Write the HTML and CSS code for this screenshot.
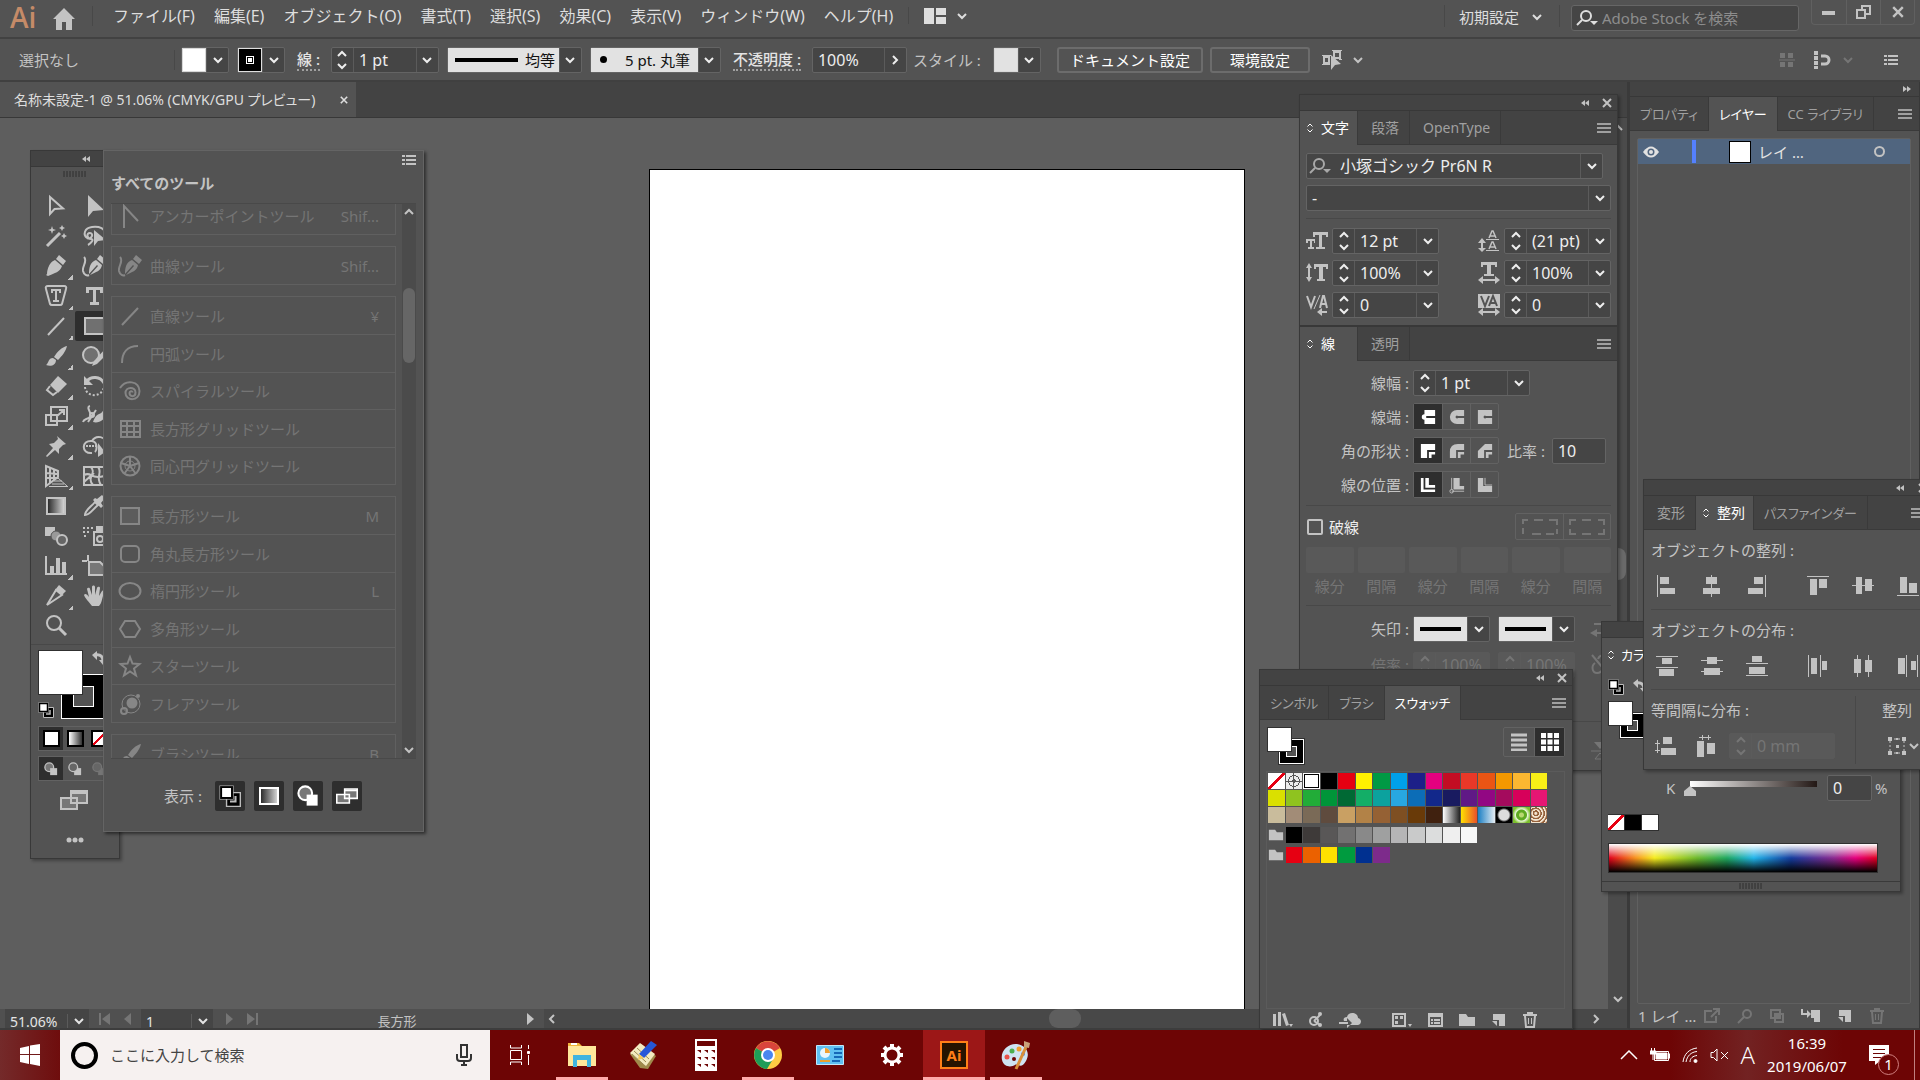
FILE: index.html
```html
<!DOCTYPE html>
<html lang="ja">
<head>
    <meta charset="UTF-8">
    <meta name="viewport" content="width=device-width, initial-scale=1.0">
    <title>名称未設定-1</title>
    <link rel="stylesheet" href="styles.css">
</head>
<body>
    <!-- Icon sprite -->
    <svg class="sprite" width="0" height="0" aria-hidden="true">
        <defs>
            <linearGradient id="bw"><stop offset="0" stop-color="#222"/><stop offset="1" stop-color="#ddd"/></linearGradient>
        </defs>
        <symbol id="down" viewBox="0 0 12 12"><path class="line2" d="M2 4l4 4 4-4"/></symbol>
        <symbol id="up" viewBox="0 0 12 12"><path class="line2" d="M2 8l4-4 4 4"/></symbol>
        <symbol id="right" viewBox="0 0 12 12"><path class="line2" d="M4 2l4 4-4 4"/></symbol>
        <symbol id="left" viewBox="0 0 12 12"><path class="line2" d="M8 2L4 6l4 4"/></symbol>
        <symbol id="spin" viewBox="0 0 12 24"><path class="line2" d="M2 8l4-4 4 4M2 16l4 4 4-4"/></symbol>
        <symbol id="sort" viewBox="0 0 8 12"><path class="line1" d="M1.500 4.500L4 2l2.500 2.500M1.500 7.500L4 10l2.500-2.500"/></symbol>
        <symbol id="menu" viewBox="0 0 14 12"><path class="line2" d="M0 2h14M0 6h14M0 10h14"/></symbol>
        <symbol id="list" viewBox="0 0 14 12"><path class="line2" d="M4 2h10M4 6h10M4 10h10M0 2h3M0 6h3M0 10h3"/></symbol>
        <symbol id="collapse" viewBox="0 0 8 6"><path class="solid" d="M4 0v6L0 3zM8 0v6L4 3z"/></symbol>
        <symbol id="expand" viewBox="0 0 8 6"><path class="solid" d="M0 0v6l4-3zM4 0v6l4-3z"/></symbol>
        <symbol id="close" viewBox="0 0 10 10"><path class="line2" d="M1 1l8 8M9 1L1 9"/></symbol>
        <symbol id="grip" viewBox="0 0 24 6"><path stroke="#353535" stroke-width="1.200" d="M1 0v6M4 0v6M7 0v6M10 0v6M13 0v6M16 0v6M19 0v6M22 0v6"/></symbol>
        <symbol id="home" viewBox="0 0 24 22"><path class="solid" d="M12 0L1 11h3v11h6v-8h4v8h6V11h3z"/></symbol>
        <symbol id="panes" viewBox="0 0 22 16"><path class="solid" d="M0 0h10v16H0zM12 0h10v7H12zM12 9h10v7H12z"/></symbol>
        <symbol id="find" viewBox="0 0 22 16"><circle class="line2" cx="10" cy="6" r="5"/><path class="line2" d="M6 10l-5 5"/><path class="solid" d="M14 11h8l-4 4z"/></symbol>
        <symbol id="minimize" viewBox="0 0 14 14"><path class="solid" d="M0 6h13v4H0z"/></symbol>
        <symbol id="restore" viewBox="0 0 18 16"><path class="line2" d="M2 6h8v8H2zM7 5V2h8v8h-4"/></symbol>
        <symbol id="isolate" viewBox="0 0 22 20"><path class="line2" d="M2 7h5v6H2zM12 2h6v6h-6z"/><path class="line1" d="M0 5.500h9M0 14.500h8M10 .500h10M20 9.500h-3"/><path class="solid" d="M9 5v15l4-5 6-1z"/></symbol>
        <symbol id="pixel-grid" viewBox="0 0 16 16"><path class="solid" d="M1 1h5v5H1zM9 1h5v5H9zM1 10h5v5H1zM9 10h5v5H9z"/><path class="line1" d="M0 8h16"/></symbol>
        <symbol id="magnet" viewBox="0 0 18 18"><path stroke="currentColor" stroke-width="4" stroke-dasharray="4 1" d="M3 0v18"/><path class="line3" d="M8 5h4a4 4 0 010 8H8"/></symbol>

        <!-- Tools -->
        <symbol id="t-select" viewBox="0 0 24 24"><path class="line2" d="M6 3v17l4.500-5 8.500-.500z"/></symbol>
        <symbol id="t-direct" viewBox="0 0 24 24"><path class="solid" d="M6 1v22l5-6 11-1z"/></symbol>
        <symbol id="t-wand" viewBox="0 0 24 24"><path class="line3" d="M3 22L16 9"/><path class="solid" d="M8 2l1 3 3 1-3 1-1 3-1-3-3-1 3-1zM18 1l1 2 2 1-2 1-1 2-1-2-2-1 2-1zM20 9l1 2 2 1-2 1-1 2-1-2-2-1 2-1z"/></symbol>
        <symbol id="t-lasso" viewBox="0 0 24 24"><path class="line2" d="M5 14C1 11 2 4 10 3s13 2 13 6M5 14c5 2 7-5 3-5s-3 6 1 6-1 5-3 6"/><path class="solid" d="M12 6v16l4-5 8-1z"/></symbol>
        <symbol id="t-pen" viewBox="0 0 24 24"><path class="solid" d="M15 1l7 6-3 4-7-6zM11 6l7 6c-2 6-7 7-14 10L2 21l9-8 1 1-8 8C2 22 3 9 11 6z"/></symbol>
        <symbol id="t-curve" viewBox="0 0 24 24"><path class="line2" d="M2 3c4 4-2 9-1 14 1 4 4 5 6 4"/><path class="solid" d="M18 1l6 5-3 4-6-5zM14 6l6 5c-1 6-6 7-12 10l8-9-1-1-8 9C7 14 8 8 14 6z"/></symbol>
        <symbol id="t-touchtype" viewBox="0 0 24 24"><path class="line2" d="M4 2h16q3 0 2 3l-4 15q-.500 1-2 1H8q-1.500 0-2-1L2 5q-1-3 2-3z"/><path class="solid" d="M7 5h10v4h-2V7h-2v9h2v2H9v-2h2V7H9v2H7z"/></symbol>
        <symbol id="t-type" viewBox="0 0 24 24"><path class="solid" d="M4 3h17v6h-3V6h-4v12h3v3H8v-3h3V6H7v3H4z"/></symbol>
        <symbol id="t-line" viewBox="0 0 24 24"><path class="line2" d="M4 21L20 4"/></symbol>
        <symbol id="t-rect" viewBox="0 0 24 24"><path fill="#707070" stroke="currentColor" stroke-width="2" d="M3 4h20v16H3z"/></symbol>
        <symbol id="t-box" viewBox="0 0 24 24"><path fill="#5c5c5c" stroke="currentColor" stroke-width="2" d="M3 4h18v16H3z"/></symbol>
        <symbol id="t-brush" viewBox="0 0 24 24"><path class="solid" d="M23 2C18 3 13 8 10 13l4 3c4-4 8-9 9-14zM9 14c-5 0-4 5-7 7 5 2 10 0 10-5z"/></symbol>
        <symbol id="t-shaper" viewBox="0 0 24 24"><circle cx="9" cy="11" r="8" fill="#707070" stroke="currentColor" stroke-width="2"/><path class="solid" d="M24 4L12 17l-2 5 5-2L24 11z"/></symbol>
        <symbol id="t-eraser" viewBox="0 0 24 24"><path class="solid" d="M14 2l9 8-9 9-8-8z"/><path class="line2" d="M6 12l-3 4 6 5 4-3"/></symbol>
        <symbol id="t-rotate" viewBox="0 0 24 24"><path class="line3" d="M5 7c4-5 13-5 17 2"/><path class="solid" d="M2 2v9h9z"/><path class="line2" stroke-dasharray="2 2" d="M3 13c1 11 18 11 19-1"/></symbol>
        <symbol id="t-scale" viewBox="0 0 24 24"><path class="line2" d="M7 3h16v14H7zM2 11h11v10H2zM13 12l7-6M15 6h5v5"/></symbol>
        <symbol id="t-width" viewBox="0 0 24 24"><path class="line2" d="M8 2c-5 1 3 8 0 11s-6 1-7 5M14 6l-8 12"/><circle class="line2" cx="10" cy="11" r="2"/><path class="solid" d="M24 5c-4 1-3 4-7 5s-6 8-6 8c6 2 12-3 13-7z"/></symbol>
        <symbol id="t-puppet" viewBox="0 0 24 24"><path class="solid" d="M13 2l9 8-3 1-4 4v5l-4-4-8 7-1-1 7-8-4-4 5-1 4-4z"/></symbol>
        <symbol id="t-shape-builder" viewBox="0 0 24 24"><path class="line2" d="M10 19c-11 1-11-13 0-12C14 0 24 3 24 9M10 7c6 1 5 9 3 11"/><path class="line2" stroke-dasharray="2 1" d="M4 12h11"/><path class="solid" d="M16 9v14l7-5z"/></symbol>
        <symbol id="t-perspective" viewBox="0 0 24 24"><path class="line2" d="M2 2v20l12-9V7zM2 9l12 1M2 14h12M6 4v15M10 6v10"/><path class="line1" d="M10 17h8M8 20h12M5 22.500h19M14 14l9 8"/></symbol>
        <symbol id="t-mesh" viewBox="0 0 24 24"><path class="line2" d="M2 3h20v18H2zM2 11c8-4 6 5 20 1M9 3c6 7-5 10 2 18M16 3c5 6-3 10 3 18M2 18L12 9"/></symbol>
        <symbol id="t-gradient" viewBox="0 0 24 24"><path fill="url(#bw)" stroke="currentColor" stroke-width="2" d="M3 4h18v16H3z"/></symbol>
        <symbol id="t-eyedropper" viewBox="0 0 24 24"><path class="line2" d="M3 21c0-5 6-8 10-13l3 3C11 15 8 21 3 21z"/><path class="solid" d="M11 6l8 8 2-2-2-3 4-5-3-3-5 4-2-1z"/></symbol>
        <symbol id="t-blend" viewBox="0 0 24 24"><path class="solid" d="M1 3h10v9H1z"/><circle cx="12" cy="12" r="5" fill="#999" stroke="#535353"/><circle cx="18" cy="16" r="5" fill="#666" stroke="currentColor" stroke-width="2"/></symbol>
        <symbol id="t-spray" viewBox="0 0 24 24"><path class="line2" stroke-dasharray="2 2" d="M1 4h10M1 8h8M2 12h4"/><path class="solid" d="M14 2h7v5h-7z"/><path class="line2" d="M12 8h12v13H12z"/><circle class="line2" cx="18" cy="15" r="3"/></symbol>
        <symbol id="t-graph" viewBox="0 0 24 24"><path class="line2" d="M2 2v18h21"/><path class="solid" d="M6 12h4v7H6zM12 4h4v15h-4zM18 8h4v11h-4z"/></symbol>
        <symbol id="t-artboard" viewBox="0 0 24 24"><path class="line2" d="M6 1v6M0 7h5"/><path fill="#777" stroke="currentColor" stroke-width="2" d="M7 8h11l4 4v9H7z"/></symbol>
        <symbol id="t-slice" viewBox="0 0 24 24"><path class="line2" d="M3 21l9-15 6 5z"/><path class="solid" d="M15 1l7 6-4 4-7-5z"/></symbol>
        <symbol id="t-hand" viewBox="0 0 24 24"><path class="solid" d="M10 22C7 18 3 14 2 11c1-2 3-1 5 2L5 5c1-2 3-1 3 0l2 6V3c0-2 3-2 3 0v8l2-7c1-2 3-1 3 0l-1 8 3-5c2-1 3 0 2 2-2 5-2 10-5 13z"/></symbol>
        <symbol id="t-zoom" viewBox="0 0 24 24"><circle class="line2" cx="10" cy="9" r="7"/><path class="line3" d="M15 14l7 7"/></symbol>
        <symbol id="t-swap" viewBox="0 0 14 14"><path class="line3" d="M3 4c6-1 8 2 8 6"/><path class="solid" d="M5 0v9L0 4zM7 9h7l-3 5z"/></symbol>
        <symbol id="t-default" viewBox="0 0 16 16"><path fill="#000" stroke="#bbb" d="M5.500 5.500h10v10h-10z"/><path fill="none" stroke="#bbb" stroke-width="1.500" d="M8 12h4V8"/><path fill="#fff" stroke="#000" stroke-width="1.500" d="M1.500 1.500h8v8h-8z"/><path fill="none" stroke="#aaa" stroke-width=".500" d="M.500.500h10v10H.500z"/></symbol>
        <symbol id="t-draw" viewBox="0 0 16 16"><circle cx="6" cy="6" r="5" fill="#777" stroke="currentColor" stroke-width="1.500"/><path class="solid" d="M7 7h8v8H7z"/></symbol>
        <symbol id="t-draw-behind" viewBox="0 0 16 16"><path class="solid" d="M7 7h8v8H7z"/><circle cx="6" cy="6" r="5" fill="#666" stroke="currentColor" stroke-width="1.500"/></symbol>
        <symbol id="t-screens" viewBox="0 0 28 20"><path fill="#777" stroke="currentColor" stroke-width="2" d="M1 8h16v11H1zM11 1h16v12H11z"/><path class="line2" d="M11 3h16"/></symbol>
        <symbol id="t-anchor" viewBox="0 0 24 24"><path class="line2" d="M6 24V2l14 15"/></symbol>
        <symbol id="t-arc" viewBox="0 0 24 24"><path class="line2" d="M4 21C4 11 9 4 20 4"/></symbol>
        <symbol id="t-spiral" viewBox="0 0 24 24"><path class="line2" d="M2 9C8 0 21 2 21.500 12c0 11-14 10-14 2 0-7 10-6.500 10-.500 0 5-6 4.500-6 .500 0-2 3-2.500 3-.500"/></symbol>
        <symbol id="t-grid" viewBox="0 0 24 24"><path class="line2" d="M3 4h19v16H3zM3 9h19M3 15h19M9 4v16M16 4v16"/></symbol>
        <symbol id="t-polar" viewBox="0 0 24 24"><circle class="line2" cx="12" cy="12" r="9.500"/><circle class="line1" cx="12" cy="12" r="5"/><path class="line2" d="M12 12V3M12 12L3 9M12 12l9-3M12 12l-6 8M12 12l6 8"/></symbol>
        <symbol id="t-round" viewBox="0 0 24 24"><rect class="line2" x="3" y="4" width="18" height="16" rx="4"/></symbol>
        <symbol id="t-ellipse" viewBox="0 0 24 24"><ellipse class="line2" cx="12" cy="12" rx="10.500" ry="8"/></symbol>
        <symbol id="t-polygon" viewBox="0 0 24 24"><path class="line2" d="M7 4h10l5 8-5 8H7l-5-8z"/></symbol>
        <symbol id="t-star" viewBox="0 0 24 24"><path class="line2" d="M12 3l2.500 6.500 7 .500-5.500 4.500 2 7-6-4-6 4 2-7L2.500 10l7-.500z"/></symbol>
        <symbol id="t-flare" viewBox="0 0 24 24"><circle class="line1" cx="13" cy="12" r="9"/><circle class="solid" cx="14" cy="11" r="5.500"/><circle class="line2" cx="6" cy="19" r="3"/><circle class="solid" cx="20" cy="4" r="2"/></symbol>

        <!-- Character panel -->
        <symbol id="c-size" viewBox="0 0 22 20"><path class="solid" d="M7 1h15v5h-2V4h-4v12h3v2h-9v-2h3V4H9v2H7zM0 8h9v4H8v-2H6v6h2v2H2v-2h2v-6H2v2H0z"/></symbol>
        <symbol id="c-leading" viewBox="0 0 22 22"><path class="line1" d="M8 9.500h13M8 20.500h13"/><path fill="none" stroke="currentColor" stroke-width="1.500" d="M11 8l3-7h1l3 7M12 6h5M11 19l3-7h1l3 7M12 17h5"/><path class="line2" d="M4 11v9"/><path class="solid" d="M4 8l4 5H0zM4 22l4-4H0z"/></symbol>
        <symbol id="c-vscale" viewBox="0 0 22 20"><path class="solid" d="M8 1h14v5h-2V4h-3v12h2v2h-8v-2h2V4h-3v2H8z"/><path class="line2" d="M3 3v13"/><path class="solid" d="M3 0l3 5H0zM3 19l3-5H0z"/></symbol>
        <symbol id="c-hscale" viewBox="0 0 22 22"><path class="solid" d="M3 0h16v5h-2V3h-4v9h3v2H6v-2h3V3H5v2H3z"/><path class="line2" d="M3 18h16"/><path class="solid" d="M0 18l5-4v8zM22 18l-5-4v8z"/></symbol>
        <symbol id="c-kern" viewBox="0 0 22 22"><path class="line2" d="M1 2l4 11L9 2M14 14l3-12h1l3 12M15 10h5"/><path class="line1" d="M8 15L14 1"/><path class="line2" d="M14 18h7"/><path class="solid" d="M11 18l5-4v8z"/></symbol>
        <symbol id="c-track" viewBox="0 0 22 22"><path class="solid" d="M0 0h22v14H0z"/><path d="M3 2l4 10 4-10M11 12l4-10 4 10M13 9h5" fill="none" stroke="#535353" stroke-width="2"/><path class="line2" d="M3 18h16"/><path class="solid" d="M0 18l5-4v8zM22 18l-5-4v8z"/></symbol>

        <!-- Stroke panel -->
        <symbol id="s-butt" viewBox="0 0 18 18"><path class="solid" d="M5 1h12v7H7v2h10v7H5v-5a3 3 0 010-6z"/></symbol>
        <symbol id="s-roundcap" viewBox="0 0 18 18"><path class="solid" d="M9 1h8v7H10a1.500 1.500 0 100 2h7v7H9A8 8 0 019 1z"/></symbol>
        <symbol id="s-square" viewBox="0 0 18 18"><path class="solid" d="M1 1h16v7H10a1.500 1.500 0 100 2h7v7H1z"/></symbol>
        <symbol id="s-miter" viewBox="0 0 18 18"><path class="solid" d="M1 1h16v7H8v9H1zM10 10h7v3h-4v4h-3z"/></symbol>
        <symbol id="s-roundjoin" viewBox="0 0 18 18"><path class="solid" d="M1 17v-7Q1 1 10 1h7v7H8v9zM10 10h7v3h-4v4h-3z"/></symbol>
        <symbol id="s-bevel" viewBox="0 0 18 18"><path class="solid" d="M1 17v-8l8-8h8v7H8v9zM10 10h7v3h-4v4h-3z"/></symbol>
        <symbol id="s-center" viewBox="0 0 18 18"><path class="solid" d="M1 1h3v13h13v3H1zM6 1h4v8h7v3H6z"/></symbol>
        <symbol id="s-inside" viewBox="0 0 18 18"><path class="solid" d="M5 1h7v9h5v4H5z"/><path class="line1" d="M3 1v13M3 16h14"/><circle class="line1" cx="3" cy="16" r="2"/></symbol>
        <symbol id="s-outside" viewBox="0 0 18 18"><path class="solid" d="M1 1h6v9h10v7H1z"/><path class="line1" d="M9 1v8h8"/></symbol>
        <symbol id="s-dash" viewBox="0 0 36 16"><path class="line2" d="M1 15V9M1 5V1h5M12 1h9M27 1h8v5M35 10v5M10 15h9M24 15h8"/></symbol>
        <symbol id="s-dash-corner" viewBox="0 0 36 16"><path class="line2" d="M1 6V1h6M1 10v5h6M13 1h9M13 15h9M29 1h6v5M35 10v5h-6"/></symbol>
        <symbol id="s-swap" viewBox="0 0 20 16"><path class="line2" d="M4 3h12M4 12h14"/><path class="solid" d="M13 0l6 3-6 4zM7 8v8l-7-4z"/></symbol>
        <symbol id="s-link" viewBox="0 0 20 24"><path class="line2" d="M2 2l16 19M8 6c2-5 8-4 9 0s-1 7-3 7M5 10c-4 3-3 10 2 10 3 0 5-2 6-4"/></symbol>
        <symbol id="s-flip" viewBox="0 0 20 18"><path class="solid" d="M3 0h13L9 7z"/><path class="line1" d="M0 9h20M4 17h11L9 11z"/></symbol>

        <!-- Align panel -->
        <symbol id="a-left" viewBox="0 0 22 22"><path class="solid" d="M1 0h1v22H1zM4 2h9v7H4zM4 13h15v6H4z"/></symbol>
        <symbol id="a-center" viewBox="0 0 22 22"><path class="solid" d="M10 0h1v22h-1zM5 2h11v7H5zM2 13h17v6H2z"/></symbol>
        <symbol id="a-right" viewBox="0 0 22 22"><path class="solid" d="M19 0h1v22h-1zM8 2h9v7H8zM2 13h15v6H2z"/></symbol>
        <symbol id="a-top" viewBox="0 0 22 22"><path class="solid" d="M0 1h22v1H0zM3 4h7v16H3zM12 4h8v9h-8z"/></symbol>
        <symbol id="a-middle" viewBox="0 0 22 22"><path class="solid" d="M0 10h22v1H0zM4 2h6v17H4zM13 4h7v12h-7z"/></symbol>
        <symbol id="a-bottom" viewBox="0 0 22 22"><path class="solid" d="M0 20h22v1H0zM3 2h7v16H3zM12 8h8v10h-8z"/></symbol>
        <symbol id="d-top" viewBox="0 0 22 22"><path class="solid" d="M0 1h22v1H0zM6 3h10v6H6zM0 12h22v1H0zM3 14h15v7H3z"/></symbol>
        <symbol id="d-middle" viewBox="0 0 22 22"><path class="solid" d="M0 5h22v1H0zM6 2h10v7H6zM0 16h22v1H0zM3 13h16v7H3z"/></symbol>
        <symbol id="d-bottom" viewBox="0 0 22 22"><path class="solid" d="M6 1h10v6H6zM0 8h22v1H0zM3 12h16v7H3zM0 20h22v1H0z"/></symbol>
        <symbol id="d-left" viewBox="0 0 22 22"><path class="solid" d="M1 0h1v22H1zM4 3h6v16H4zM13 0h1v22h-1zM15 6h5v9h-5z"/></symbol>
        <symbol id="d-center" viewBox="0 0 22 22"><path class="solid" d="M5 0h1v22H5zM2 4h7v14H2zM16 0h1v22h-1zM13 5h7v12h-7z"/></symbol>
        <symbol id="d-right" viewBox="0 0 22 22"><path class="solid" d="M1 3h7v16H1zM9 0h1v22H9zM14 6h5v9h-5zM20 0h1v22h-1z"/></symbol>
        <symbol id="d-vspace" viewBox="0 0 22 22"><path class="solid" d="M8 2h9v7H8zM6 13h15v7H6z"/><path class="line1" d="M2.500 5v13M0 8.500h5M0 15.500h5"/></symbol>
        <symbol id="d-hspace" viewBox="0 0 22 22"><path class="solid" d="M2 6h7v16H2zM12 8h8v11h-8z"/><path class="line1" d="M4 2.500h12M7.500 0v5M13.500 0v5"/></symbol>
        <symbol id="d-target" viewBox="0 0 18 18"><path class="line1" stroke-dasharray="2 2" d="M2 2h14v14H2z"/><path class="solid" d="M0 0h4v4H0zM14 0h4v4h-4zM0 14h4v4H0zM14 14h4v4h-4zM8 8h3v3H8zM8 1h2v2H8zM8 15h2v2H8z"/></symbol>

        <!-- Panel footers -->
        <symbol id="f-library" viewBox="0 0 20 16"><path class="solid" d="M0 2h3v12H0zM5 0h3v14H5zM9 2l3-1 4 12-3 1zM16 12h4l-2 3z"/></symbol>
        <symbol id="f-share" viewBox="0 0 16 16"><circle class="line2" cx="6" cy="9" r="4"/><path class="line2" d="M6 9l6-6M6 9l6 4"/><circle class="solid" cx="12" cy="2" r="2"/><circle class="solid" cx="12" cy="13" r="2"/></symbol>
        <symbol id="f-cloud" viewBox="0 0 22 16"><path class="solid" d="M8 13h11c4-1 4-6 0-7 0-6-10-7-11-1-3 0-4 2-3 4h3V6l5 5-5 5z"/><path class="line2" d="M0 11h9"/></symbol>
        <symbol id="f-kinds" viewBox="0 0 20 16"><path class="line2" d="M1 2h12v12H1z"/><path class="solid" d="M3 4h3v3H3zM8 4h3v3H8zM3 9h3v3H3zM16 12h4l-2 3z"/></symbol>
        <symbol id="f-options" viewBox="0 0 16 16"><path class="line2" d="M2 2h13v12H2zM2 4h13M4 8h2M7 8h6M4 11h2M7 11h6"/></symbol>
        <symbol id="f-folder" viewBox="0 0 18 16"><path class="solid" d="M1 2h7l2 3h7v9H1z"/></symbol>
        <symbol id="f-new" viewBox="0 0 16 16"><path class="solid" d="M2 2h12v12H8V8H2z"/><path class="solid" d="M1 9h5v5z"/></symbol>
        <symbol id="f-trash" viewBox="0 0 16 16"><path class="line2" d="M3 4l1 11h8l1-11M1 3h14M6 2V1h4v1"/><path class="line1" d="M6.500 6v6M9.500 6v6"/></symbol>
        <symbol id="f-export" viewBox="0 0 16 16"><path class="line2" d="M8 3H1v11h11V8M7 9l7-7M9 1h6v6"/></symbol>
        <symbol id="f-search" viewBox="0 0 16 16"><circle class="line2" cx="10" cy="6" r="4"/><path class="line2" d="M7 9l-6 6"/></symbol>
        <symbol id="f-mask" viewBox="0 0 16 16"><path class="line2" d="M2 2h9v8H2zM6 6h8v8H6z"/><path class="solid" d="M6 6h5v4H6z"/></symbol>
        <symbol id="f-sublayer" viewBox="0 0 20 16"><path class="line2" d="M1 1v5h6"/><path class="solid" d="M6 2v8l4-4zM10 2h9v12h-6v-4h-3z"/></symbol>
        <symbol id="eye" viewBox="0 0 16 12"><path class="solid" d="M0 6q8-11 16 0-8 11-16 0z"/><circle cx="8" cy="6" r="3.500" fill="#50657f"/><circle class="solid" cx="8" cy="6" r="2"/></symbol>
        <symbol id="rows" viewBox="0 0 16 18"><path class="line3" d="M0 2h16M0 7h16M0 12h16M0 17h16"/></symbol>
        <symbol id="cells" viewBox="0 0 18 18"><path class="solid" d="M0 0h5v5H0zM6.500 0h5v5h-5zM13 0h5v5h-5zM0 6.500h5v5H0zM6.500 6.500h5v5h-5zM13 6.500h5v5h-5zM0 13h5v5H0zM6.500 13h5v5h-5zM13 13h5v5h-5z"/></symbol>
    </svg>

    <header class="menu-bar">
        <span class="app-logo">Ai</span>
        <button class="icon-button home" aria-label="ホーム"><svg width="24" height="22"><use href="#home"/></svg></button>
        <nav class="menus">
            <a href="#">ファイル(F)</a>
            <a href="#">編集(E)</a>
            <a href="#">オブジェクト(O)</a>
            <a href="#">書式(T)</a>
            <a href="#">選択(S)</a>
            <a href="#">効果(C)</a>
            <a href="#">表示(V)</a>
            <a href="#">ウィンドウ(W)</a>
            <a href="#">ヘルプ(H)</a>
        </nav>
        <button class="icon-button arrange" aria-label="ドキュメントレイアウト"><svg width="22" height="16"><use href="#panes"/></svg><svg width="12" height="12"><use href="#down"/></svg></button>
        <button class="workspace-switch">初期設定<svg width="12" height="12"><use href="#down"/></svg></button>
        <label class="stock-search"><svg width="22" height="16"><use href="#find"/></svg><input type="text" placeholder="Adobe Stock を検索"></label>
        <div class="window-buttons">
            <button aria-label="最小化"><svg width="14" height="14"><use href="#minimize"/></svg></button>
            <button aria-label="元に戻す"><svg width="18" height="16"><use href="#restore"/></svg></button>
            <button aria-label="閉じる"><svg width="12" height="12"><use href="#close"/></svg></button>
        </div>
    </header>

    <div class="control-bar">
        <span class="selection-state">選択なし</span>
        <div class="picker"><button class="chip chip-fill" aria-label="塗り"></button><button class="drop" aria-label="塗りを選択"><svg width="12" height="12"><use href="#down"/></svg></button></div>
        <div class="picker"><button class="chip chip-stroke" aria-label="線"></button><button class="drop" aria-label="線を選択"><svg width="12" height="12"><use href="#down"/></svg></button></div>
        <label class="dotted" for="stroke-width">線 :</label>
        <div class="combo combo-stroke"><button class="spin" aria-label="増減"><svg width="12" height="24"><use href="#spin"/></svg></button><input id="stroke-width" type="text" value="1 pt"><button class="drop" aria-label="線幅を選択"><svg width="12" height="12"><use href="#down"/></svg></button></div>
        <div class="picker"><button class="preview profile"><i class="stroke-sample"></i>均等</button><button class="drop" aria-label="プロファイル"><svg width="12" height="12"><use href="#down"/></svg></button></div>
        <div class="picker"><button class="preview brush"><i class="dot-sample"></i>5 pt. 丸筆</button><button class="drop" aria-label="ブラシ"><svg width="12" height="12"><use href="#down"/></svg></button></div>
        <label class="dotted" for="opacity">不透明度 :</label>
        <div class="combo combo-opacity"><input id="opacity" type="text" value="100%"><button class="drop" aria-label="不透明度"><svg width="12" height="12"><use href="#right"/></svg></button></div>
        <span class="style-label">スタイル :</span>
        <div class="picker"><button class="chip chip-style" aria-label="スタイル"></button><button class="drop" aria-label="スタイルを選択"><svg width="12" height="12"><use href="#down"/></svg></button></div>
        <button class="text-button doc-setup">ドキュメント設定</button>
        <button class="text-button preferences">環境設定</button>
        <button class="icon-button isolate" aria-label="選択"><svg width="22" height="20"><use href="#isolate"/></svg><svg width="12" height="12"><use href="#down"/></svg></button>
        <div class="control-end">
            <svg class="dim" width="16" height="16"><use href="#pixel-grid"/></svg>
            <svg width="18" height="18"><use href="#magnet"/></svg>
            <svg class="dim magnet-drop" width="12" height="12"><use href="#down"/></svg>
            <svg width="14" height="12"><use href="#list"/></svg>
        </div>
    </div>

    <main class="workspace">
        <section class="document">
            <div class="document-tabs">
                <div class="document-tab"><span>名称未設定-1 @ 51.06% (CMYK/GPU プレビュー)</span><button class="icon-button" aria-label="閉じる"><svg width="8" height="8"><use href="#close"/></svg></button></div>
            </div>
            <div class="canvas">
                <div class="artboard"></div>
                <div class="v-scroll">
                    <svg width="12" height="12"><use href="#up"/></svg>
                    <i class="v-thumb"></i>
                    <svg width="12" height="12"><use href="#down"/></svg>
                </div>
            </div>
            <div class="status-bar">
                <div class="status-field zoom-field"><input type="text" value="51.06%" aria-label="ズーム"><button aria-label="ズームを選択"><svg width="12" height="12"><use href="#down"/></svg></button></div>
                <div class="status-nav"><svg width="12" height="12"><path class="solid" d="M0 0h2v12H0zM11 0v12L3 6z"/></svg><svg width="12" height="12"><path class="solid" d="M9 0v12L2 6z"/></svg></div>
                <div class="status-field page-field"><input type="text" value="1" aria-label="アートボード"><button aria-label="アートボードを選択"><svg width="12" height="12"><use href="#down"/></svg></button></div>
                <div class="status-nav"><svg width="12" height="12"><path class="solid" d="M3 0v12l7-6z"/></svg><svg width="12" height="12"><path class="solid" d="M10 0h2v12h-2zM1 0v12l8-6z"/></svg></div>
                <span class="status-text">長方形</span>
                <svg class="status-play" width="8" height="12"><path class="solid" d="M0 0v12l7-6z"/></svg>
                <div class="h-scroll">
                    <svg width="12" height="12"><use href="#left"/></svg>
                    <i class="h-thumb"></i>
                    <svg width="12" height="12"><use href="#right"/></svg>
                </div>
            </div>
        </section>

        <aside class="dock">
            <div class="panel-head"><svg width="8" height="6"><use href="#expand"/></svg></div>
            <div class="tabs">
                <button class="tab tab-kana">プロパティ</button>
                <button class="tab tab-kana active">レイヤー</button>
                <button class="tab tab-kana">CC ライブラリ</button>
                <svg class="panel-menu" width="14" height="12"><use href="#menu"/></svg>
            </div>
            <div class="layer-list">
                <div class="layer-row">
                    <svg width="16" height="12"><use href="#eye"/></svg>
                    <i class="layer-color"></i>
                    <i class="layer-thumb"></i>
                    <span>レイ …</span>
                    <i class="layer-target"></i>
                </div>
            </div>
            <div class="dock-foot">
                <span>1 レイ …</span>
                <svg class="dim" width="16" height="16"><use href="#f-export"/></svg>
                <svg class="dim" width="16" height="16"><use href="#f-search"/></svg>
                <svg class="dim" width="16" height="16"><use href="#f-mask"/></svg>
                <svg width="20" height="16"><use href="#f-sublayer"/></svg>
                <svg width="16" height="16"><use href="#f-new"/></svg>
                <svg class="dim" width="16" height="16"><use href="#f-trash"/></svg>
            </div>
        </aside>

        <!-- Toolbox and the drawer with every tool -->
        <section class="panel toolbox">
            <div class="panel-head toolbox-head"><svg width="8" height="6"><use href="#collapse"/></svg></div>
            <svg class="grip" width="24" height="6"><use href="#grip"/></svg>
            <div class="tool-grid" id="toolGrid"></div>
            <div class="fill-stroke">
                <i class="big-stroke"></i><i class="big-fill"></i>
                <svg class="swap" width="14" height="14"><use href="#t-swap"/></svg>
                <svg class="default" width="16" height="16"><use href="#t-default"/></svg>
            </div>
            <div class="mode-row">
                <button class="active" aria-label="カラー"><i class="mode-color"></i></button>
                <button aria-label="グラデーション"><i class="mode-color mode-gradient"></i></button>
                <button aria-label="なし"><i class="mode-color none"></i></button>
            </div>
            <div class="mode-row">
                <button class="active" aria-label="標準描画"><svg width="14" height="14"><use href="#t-draw"/></svg></button>
                <button aria-label="背面描画"><svg width="14" height="14"><use href="#t-draw-behind"/></svg></button>
                <button class="dim" aria-label="内側描画"><svg width="14" height="14"><use href="#t-draw-behind"/></svg></button>
            </div>
            <svg class="screens" width="28" height="20"><use href="#t-screens"/></svg>
            <svg class="more" width="18" height="6"><circle class="solid" cx="3" cy="3" r="2.500"/><circle class="solid" cx="9" cy="3" r="2.500"/><circle class="solid" cx="15" cy="3" r="2.500"/></svg>
        </section>

        <section class="drawer">
            <div class="drawer-head"><svg width="14" height="12"><use href="#list"/></svg></div>
            <h2>すべてのツール</h2>
            <div class="drawer-body">
                <div class="tool-list">
                    <ul class="first">
                        <li><svg width="24" height="24"><use href="#t-anchor"/></svg>アンカーポイントツール<kbd>Shif...</kbd></li>
                    </ul>
                    <ul>
                        <li><svg width="24" height="24"><use href="#t-curve"/></svg>曲線ツール<kbd>Shif...</kbd></li>
                    </ul>
                    <ul>
                        <li><svg width="24" height="24"><use href="#t-line"/></svg>直線ツール<kbd>¥</kbd></li>
                        <li><svg width="24" height="24"><use href="#t-arc"/></svg>円弧ツール</li>
                        <li><svg width="24" height="24"><use href="#t-spiral"/></svg>スパイラルツール</li>
                        <li><svg width="24" height="24"><use href="#t-grid"/></svg>長方形グリッドツール</li>
                        <li><svg width="24" height="24"><use href="#t-polar"/></svg>同心円グリッドツール</li>
                    </ul>
                    <ul>
                        <li><svg width="24" height="24"><use href="#t-box"/></svg>長方形ツール<kbd>M</kbd></li>
                        <li><svg width="24" height="24"><use href="#t-round"/></svg>角丸長方形ツール</li>
                        <li><svg width="24" height="24"><use href="#t-ellipse"/></svg>楕円形ツール<kbd>L</kbd></li>
                        <li><svg width="24" height="24"><use href="#t-polygon"/></svg>多角形ツール</li>
                        <li><svg width="24" height="24"><use href="#t-star"/></svg>スターツール</li>
                        <li><svg width="24" height="24"><use href="#t-flare"/></svg>フレアツール</li>
                    </ul>
                    <ul>
                        <li><svg width="24" height="24"><use href="#t-brush"/></svg>ブラシツール<kbd>B</kbd></li>
                    </ul>
                </div>
                <div class="drawer-scroll">
                    <svg width="12" height="12"><use href="#up"/></svg>
                    <i></i>
                    <svg width="12" height="12"><use href="#down"/></svg>
                </div>
            </div>
            <div class="drawer-foot">
                <span>表示 :</span>
                <button aria-label="塗りと線"><svg width="22" height="22"><use href="#t-default"/></svg></button>
                <button aria-label="カラー"><svg width="24" height="24"><use href="#t-gradient"/></svg></button>
                <button aria-label="描画モード"><svg width="22" height="22"><use href="#t-draw"/></svg></button>
                <button aria-label="スクリーンモード"><svg width="22" height="18"><use href="#t-screens"/></svg></button>
            </div>
        </section>

        <!-- Character and stroke -->
        <section class="panel type-panel">
            <div class="panel-head"><svg width="8" height="6"><use href="#collapse"/></svg><svg width="10" height="10"><use href="#close"/></svg></div>
            <div class="tabs">
                <button class="tab active"><svg width="8" height="12"><use href="#sort"/></svg>文字</button>
                <button class="tab">段落</button>
                <button class="tab">OpenType</button>
                <svg class="panel-menu" width="14" height="12"><use href="#menu"/></svg>
            </div>
            <div class="type-body">
                <div class="combo font-family"><svg class="font-find" width="22" height="16"><use href="#find"/></svg><input type="text" value="小塚ゴシック Pr6N R" aria-label="フォント"><button class="drop" aria-label="フォントを選択"><svg width="12" height="12"><use href="#down"/></svg></button></div>
                <div class="combo font-style"><select aria-label="スタイル"><option>-</option></select><span class="drop"><svg width="12" height="12"><use href="#down"/></svg></span></div>
                <div class="type-grid" id="typeGrid"></div>
            </div>
            <div class="tabs stroke-tabs">
                <button class="tab active"><svg width="8" height="12"><use href="#sort"/></svg>線</button>
                <button class="tab">透明</button>
                <svg class="panel-menu" width="14" height="12"><use href="#menu"/></svg>
            </div>
            <div class="stroke-body">
                <div class="stroke-row">
                    <label for="weight">線幅 :</label>
                    <div class="combo combo-weight"><button class="spin" aria-label="増減"><svg width="12" height="24"><use href="#spin"/></svg></button><input id="weight" type="text" value="1 pt"><button class="drop" aria-label="線幅を選択"><svg width="12" height="12"><use href="#down"/></svg></button></div>
                </div>
                <div class="stroke-row">
                    <span class="label">線端 :</span>
                    <div class="segmented">
                        <button class="active" aria-label="バット"><svg width="16" height="18"><use href="#s-butt"/></svg></button>
                        <button aria-label="丸型線端"><svg width="16" height="18"><use href="#s-roundcap"/></svg></button>
                        <button aria-label="突出線端"><svg width="16" height="18"><use href="#s-square"/></svg></button>
                    </div>
                </div>
                <div class="stroke-row">
                    <span class="label">角の形状 :</span>
                    <div class="segmented">
                        <button class="active" aria-label="マイター"><svg width="16" height="18"><use href="#s-miter"/></svg></button>
                        <button aria-label="ラウンド"><svg width="16" height="18"><use href="#s-roundjoin"/></svg></button>
                        <button aria-label="ベベル"><svg width="16" height="18"><use href="#s-bevel"/></svg></button>
                    </div>
                    <label class="ratio-label" for="ratio">比率 :</label>
                    <div class="combo combo-ratio"><input id="ratio" type="text" value="10"></div>
                </div>
                <div class="stroke-row">
                    <span class="label">線の位置 :</span>
                    <div class="segmented">
                        <button class="active" aria-label="中央"><svg width="16" height="18"><use href="#s-center"/></svg></button>
                        <button aria-label="内側"><svg width="16" height="18"><use href="#s-inside"/></svg></button>
                        <button aria-label="外側"><svg width="16" height="18"><use href="#s-outside"/></svg></button>
                    </div>
                </div>
                <div class="dash-head">
                    <input type="checkbox" id="dashed"><label for="dashed">破線</label>
                    <div class="segmented dash-modes dim">
                        <button aria-label="正確な長さ"><svg width="36" height="16"><use href="#s-dash"/></svg></button>
                        <button aria-label="長さを調整"><svg width="36" height="16"><use href="#s-dash-corner"/></svg></button>
                    </div>
                </div>
                <div class="dash-grid">
                    <label><input type="text" disabled>線分</label>
                    <label><input type="text" disabled>間隔</label>
                    <label><input type="text" disabled>線分</label>
                    <label><input type="text" disabled>間隔</label>
                    <label><input type="text" disabled>線分</label>
                    <label><input type="text" disabled>間隔</label>
                </div>
                <div class="stroke-row arrow-row">
                    <span class="label">矢印 :</span>
                    <div class="picker"><button class="preview arrow" aria-label="始点の矢印"><i class="stroke-sample"></i></button><button class="drop" aria-label="始点を選択"><svg width="12" height="12"><use href="#down"/></svg></button></div>
                    <div class="picker"><button class="preview arrow" aria-label="終点の矢印"><i class="stroke-sample"></i></button><button class="drop" aria-label="終点を選択"><svg width="12" height="12"><use href="#down"/></svg></button></div>
                    <svg class="dim arrow-swap" width="20" height="16"><use href="#s-swap"/></svg>
                </div>
                <div class="stroke-row scale-row dim">
                    <span class="label">倍率 :</span>
                    <div class="combo"><span class="spin"><svg width="12" height="24"><use href="#spin"/></svg></span><input type="text" value="100%" aria-label="始点の倍率" disabled></div>
                    <div class="combo"><span class="spin"><svg width="12" height="24"><use href="#spin"/></svg></span><input type="text" value="100%" aria-label="終点の倍率" disabled></div>
                    <svg class="arrow-swap" width="20" height="24"><use href="#s-link"/></svg>
                </div>
                <div class="profile-row dim"><svg width="20" height="18"><use href="#s-flip"/></svg></div>
            </div>
        </section>

        <!-- Swatches -->
        <section class="panel swatch-panel">
            <div class="panel-head"><svg width="8" height="6"><use href="#collapse"/></svg><svg width="10" height="10"><use href="#close"/></svg></div>
            <div class="tabs">
                <button class="tab tab-kana">シンボル</button>
                <button class="tab tab-kana">ブラシ</button>
                <button class="tab tab-kana active">スウォッチ</button>
                <svg class="panel-menu" width="14" height="12"><use href="#menu"/></svg>
            </div>
            <div class="swatch-head">
                <div class="mini-fs"><i class="mini-stroke"></i><i class="mini-fill"></i></div>
                <div class="segmented view-modes">
                    <button aria-label="リスト表示"><svg width="16" height="18"><use href="#rows"/></svg></button>
                    <button class="active" aria-label="サムネール表示"><svg width="18" height="18"><use href="#cells"/></svg></button>
                </div>
            </div>
            <div class="swatch-list">
                <div class="swatches" id="swatchMain"></div>
                <div class="swatches" id="swatchGrays"></div>
                <div class="swatches" id="swatchBrights"></div>
            </div>
            <div class="swatch-foot">
                <svg width="20" height="16"><use href="#f-library"/></svg>
                <svg width="16" height="16"><use href="#f-share"/></svg>
                <svg class="foot-cloud" width="22" height="16"><use href="#f-cloud"/></svg>
                <svg width="20" height="16"><use href="#f-kinds"/></svg>
                <svg width="16" height="16"><use href="#f-options"/></svg>
                <svg width="18" height="16"><use href="#f-folder"/></svg>
                <svg width="16" height="16"><use href="#f-new"/></svg>
                <svg width="16" height="16"><use href="#f-trash"/></svg>
            </div>
        </section>

        <!-- Color -->
        <section class="panel color-panel">
            <div class="panel-head"></div>
            <div class="color-title"><svg width="8" height="12"><use href="#sort"/></svg>カラー</div>
            <div class="color-icons"><svg width="16" height="16"><use href="#t-default"/></svg><svg width="14" height="14"><use href="#t-swap"/></svg></div>
            <div class="mini-fs"><i class="mini-stroke"></i><i class="mini-fill"></i></div>
            <div class="k-row">
                <label for="k-slider">K</label>
                <input type="range" id="k-slider" min="0" max="100" value="0">
                <div class="combo combo-k"><input type="text" value="0" aria-label="K"></div>
                <span>%</span>
            </div>
            <div class="quick-colors"><i class="none"></i><i class="black"></i><i class="white"></i></div>
            <div class="spectrum"></div>
            <div class="color-foot"><svg width="24" height="6"><use href="#grip"/></svg></div>
        </section>

        <!-- Align -->
        <section class="panel align-panel">
            <div class="panel-head"><svg width="8" height="6"><use href="#collapse"/></svg><svg width="10" height="10"><use href="#close"/></svg></div>
            <div class="tabs">
                <button class="tab">変形</button>
                <button class="tab active"><svg width="8" height="12"><use href="#sort"/></svg>整列</button>
                <button class="tab tab-kana">パスファインダー</button>
                <svg class="panel-menu" width="14" height="12"><use href="#menu"/></svg>
            </div>
            <div class="align-group">
                <h3>オブジェクトの整列 :</h3>
                <div class="align-icons">
                    <svg width="22" height="22"><use href="#a-left"/></svg>
                    <svg width="22" height="22"><use href="#a-center"/></svg>
                    <svg width="22" height="22"><use href="#a-right"/></svg>
                    <svg width="22" height="22"><use href="#a-top"/></svg>
                    <svg width="22" height="22"><use href="#a-middle"/></svg>
                    <svg width="22" height="22"><use href="#a-bottom"/></svg>
                </div>
            </div>
            <div class="align-group">
                <h3>オブジェクトの分布 :</h3>
                <div class="align-icons">
                    <svg width="22" height="22"><use href="#d-top"/></svg>
                    <svg width="22" height="22"><use href="#d-middle"/></svg>
                    <svg width="22" height="22"><use href="#d-bottom"/></svg>
                    <svg width="22" height="22"><use href="#d-left"/></svg>
                    <svg width="22" height="22"><use href="#d-center"/></svg>
                    <svg width="22" height="22"><use href="#d-right"/></svg>
                </div>
            </div>
            <div class="space-group">
                <div class="space-left">
                    <h3>等間隔に分布 :</h3>
                    <div class="space-row">
                        <svg width="22" height="22"><use href="#d-vspace"/></svg>
                        <svg width="22" height="22"><use href="#d-hspace"/></svg>
                        <div class="combo dim"><span class="spin"><svg width="12" height="24"><use href="#spin"/></svg></span><input type="text" value="0 mm" aria-label="間隔値" disabled></div>
                    </div>
                </div>
                <div class="space-right">
                    <h3>整列</h3>
                    <button class="icon-button" aria-label="整列の基準"><svg width="18" height="18"><use href="#d-target"/></svg><svg width="12" height="12"><use href="#down"/></svg></button>
                </div>
            </div>
        </section>
    </main>

    <footer class="taskbar">
        <button class="start" aria-label="スタート"><svg width="20" height="22" viewBox="0 0 20 22"><path fill="#fff" d="M0 4l9-2v8H0zM10 1.500L20 0v10H10zM0 11h9v9l-9-2zM10 11h10v11l-10-2z"/></svg></button>
        <label class="task-search">
            <i class="cortana"></i>
            <input type="text" placeholder="ここに入力して検索">
            <svg width="16" height="22" viewBox="0 0 16 22" fill="none" stroke="#333" stroke-width="2"><path d="M5 1h6v12H5zM1 10v4q0 3 3 3h8q3 0 3-3v-4M8 17v4M5 21h6"/></svg>
        </label>
        <div class="apps">
            <button aria-label="タスクビュー"><svg width="22" height="20" viewBox="0 0 22 20" fill="none" stroke="#fff"><path d="M1.500 5.500h11v9h-11zM1.500 0v3h11V0M1.500 20v-3h11v3M19.500 0v4M19.500 10v10"/><path fill="#fff" d="M18.500 6.500h2v2h-2z"/></svg></button>
            <button class="running" aria-label="エクスプローラー"><svg width="28" height="26" viewBox="0 0 28 26"><path fill="#f0b43c" d="M0 1h11l3 3H0z"/><path fill="#ffe79b" d="M0 4h28v20H0z"/><path fill="#fff" d="M3 1h6v2H3z"/><path fill="#3fb4e0" d="M5 13h18v12h-4v-7H9v7H5z"/></svg></button>
            <button aria-label="ジャーナル"><svg width="30" height="30" viewBox="0 0 30 30"><path fill="#a08a4c" d="M1 14l11-10 15 12-8 13-8-1z"/><path fill="#f3eac0" d="M1 13L11 3l15 11-9 12z"/><path stroke="#9c8c55" d="M5 11l12 11M8 8l12 11M3 14l11 10"/><path fill="#2657d8" d="M22 1l6 4-13 13-5-4z"/><path fill="#f0c860" d="M10 14l5 4-6 2z"/></svg></button>
            <button aria-label="電卓"><svg width="22" height="32" viewBox="0 0 22 32"><path fill="#fff" d="M0 0h22v32H0z"/><path fill="#6d0505" d="M2 2h18v5H2zM2 11h4v3zM9 11h4v3zM16 11h4v3zM2 18h4v3zM9 18h4v3zM16 18h4v3zM2 25h4v3zM9 25h4v3zM16 25h4v3z"/></svg></button>
            <button class="running" aria-label="Chrome"><svg width="28" height="28" viewBox="0 0 28 28"><circle cx="14" cy="14" r="14" fill="#fc4"/><path fill="#d9453c" d="M14 14L2 7a14 14 0 0124 0z"/><path fill="#1f9d58" d="M14 14L2 7a14 14 0 0011 21l6-10z"/><circle cx="14" cy="14" r="7" fill="#fff"/><circle cx="14" cy="14" r="5" fill="#4a86ef"/></svg></button>
            <button aria-label="コントロールパネル"><svg width="28" height="20" viewBox="0 0 28 20"><path fill="#5fc0f2" stroke="#bfe8fc" d="M.500.500h27v19H.500z"/><circle cx="9" cy="8" r="5" fill="#e8f5fc"/><path fill="#f0a030" d="M9 8V3a5 5 0 015 5z"/><path stroke="#1668b8" stroke-width="2" d="M18 4h8M18 8h8M18 12h8"/><path stroke="#e8a030" stroke-width="2" d="M4 16h10"/><path stroke="#1668b8" stroke-width="2" d="M16 16h8"/></svg></button>
            <button aria-label="設定"><svg width="24" height="24" viewBox="0 0 24 24" fill="none" stroke="#fff"><circle cx="12" cy="12" r="7" stroke-width="3"/><path stroke-width="4" d="M12 1v4M12 19v4M1 12h4M19 12h4M4 4l3 3M17 17l3 3M4 20l3-3M17 7l3-3"/></svg></button>
            <button class="running current" aria-label="Illustrator"><span class="ai-tile">Ai</span></button>
            <button class="running" aria-label="ペイント"><svg width="30" height="30" viewBox="0 0 30 30"><path fill="#cfe4f2" d="M1 20C-1 10 8 3 16 4s14 8 9 17-8 2-11 4-11 3-13-5z"/><circle cx="6" cy="17" r="2.500" fill="#e8524a"/><circle cx="11" cy="11" r="2.500" fill="#4caf50"/><circle cx="18" cy="9" r="2.500" fill="#f0a030"/><circle cx="22" cy="14" r="2" fill="#4a86ef"/><circle cx="13" cy="19" r="2" fill="#6d0505"/><path stroke="#d9903a" stroke-width="3" d="M15 29L25 7"/><path fill="#c9a27a" d="M23 1l6 2-1 5-5-1z"/></svg></button>
        </div>
        <div class="tray">
            <svg width="18" height="10" viewBox="0 0 18 10" fill="none" stroke="#fff" stroke-width="1.500"><path d="M1 9l8-8 8 8"/></svg>
            <svg width="20" height="14" viewBox="0 0 20 14" fill="none" stroke="#fff"><path d="M4.500 3.500h14v9h-14zM1.500 0v3M4.500 0v3M3 6v6"/><path fill="#fff" d="M6 5h11v6H6zM0 3h6v3H0zM19 6h1v4h-1z"/></svg>
            <svg width="16" height="16" viewBox="0 0 16 16" fill="none" stroke="#fff"><path d="M1 15C2 7 7 2 15 1M4 15c1-6 5-10 11-10.500M8 15c0-4 3-6 7-6.500"/><circle cx="13.500" cy="14" r="1.500" fill="#fff"/></svg>
            <svg width="19" height="14" viewBox="0 0 19 14" fill="none" stroke="#fff"><path d="M1 4.500h2.500L7 1v12L3.500 9.500H1zM11 4l7 7M18 4l-7 7"/></svg>
            <span class="ime">A</span>
            <time>16:39<br>2019/06/07</time>
            <button class="notice" aria-label="通知"><svg width="20" height="20" viewBox="0 0 20 20"><path fill="#fff" d="M0 0h20v16h-9l-5 4v-4H0z"/><path stroke="#6d0505" d="M4 4.500h12M4 8.500h12M4 12.500h9"/></svg><span>1</span></button>
        </div>
    </footer>

    <script>
        // Toolbox: icon name, and whether the slot holds hidden tools
        const tools = [
            ['select', 0], ['direct', 0], ['wand', 0], ['lasso', 0], ['pen', 1], ['curve', 0],
            ['touchtype', 1], ['type', 0], ['line', 1], ['rect', 0], ['brush', 1], ['shaper', 0],
            ['eraser', 1], ['rotate', 0], ['scale', 1], ['width', 0], ['puppet', 1], ['shape-builder', 0],
            ['perspective', 1], ['mesh', 0], ['gradient', 0], ['eyedropper', 0], ['blend', 0], ['spray', 0],
            ['graph', 1], ['artboard', 0], ['slice', 1], ['hand', 0], ['zoom', 0]
        ];
        document.getElementById('toolGrid').innerHTML = tools.map(function(tool) {
            const names = 'tool' + (tool[1] ? ' more-tools' : '') + (tool[0] === 'rect' ? ' active' : '');
            return '<button class="' + names + '" aria-label="' + tool[0] + '"><svg width="24" height="24"><use href="#t-' + tool[0] + '"/></svg></button>';
        }).join('');

        // Character panel fields
        const typeFields = [
            ['size', '12 pt'], ['leading', '(21 pt)'],
            ['vscale', '100%'], ['hscale', '100%'],
            ['kern', '0'], ['track', '0']
        ];
        document.getElementById('typeGrid').innerHTML = typeFields.map(function(field) {
            return '<div class="type-field"><svg width="22" height="22"><use href="#c-' + field[0] + '"/></svg>' +
                '<div class="combo"><button class="spin" aria-label="増減"><svg width="12" height="24"><use href="#spin"/></svg></button>' +
                '<input type="text" aria-label="' + field[0] + '" value="' + field[1] + '">' +
                '<button class="drop" aria-label="選択"><svg width="12" height="12"><use href="#down"/></svg></button></div></div>';
        }).join('');

        // Swatches: a colour, or the class of a special swatch
        const main = [
            'none', 'registration', 'picked', '#000000', '#e60012', '#fff100', '#009944', '#00a0e9',
            '#1d2088', '#e4007f', '#c30d23', '#e83828', '#ea5514', '#f39800', '#fbb731', '#f9ee17',
            '#dae000', '#8fc31f', '#22ac38', '#009539', '#006934', '#13ae67', '#0ca29e', '#28a7e1',
            '#0c6db7', '#12288b', '#191b60', '#601986', '#920783', '#a40b5d', '#d7005a', '#e61673',
            '#c9bc9c', '#a28c77', '#7a6a57', '#5f4b3e', '#c9a063', '#b28247', '#956134', '#7e4f22',
            '#693a08', '#40210f', 'grad-bw', 'grad-orange', 'grad-sky', 'grad-spot', 'pattern-leaf', 'pattern-vine'
        ];
        const grays = ['folder', '#000000', '#3e3a39', '#595757', '#727171', '#898989', '#9fa0a0', '#b5b5b6', '#c9caca', '#dcdddd', '#efefef', '#f7f8f8'];
        const brights = ['folder', '#e60012', '#eb6100', '#ffe100', '#009b3f', '#003090', '#7d2b8b'];

        function fillSwatches(id, list) {
            document.getElementById(id).innerHTML = list.map(function(item) {
                if (item === 'folder') {
                    return '<svg class="folder" width="16" height="16"><use href="#f-folder"/></svg>';
                }
                if (item[0] === '#') {
                    return '<button class="swatch" aria-label="' + item + '" style="background:' + item + '"></button>';
                }
                return '<button class="swatch ' + item + '" aria-label="' + item + '"></button>';
            }).join('');
        }
        fillSwatches('swatchMain', main);
        fillSwatches('swatchGrays', grays);
        fillSwatches('swatchBrights', brights);
    </script>
</body>
</html>
```
FILE: styles.css
```css
* {
    box-sizing: border-box;
}
body {
    margin: 0;
    height: 100vh;
    display: flex;
    flex-direction: column;
    overflow: hidden;
    background: #535353;
    color: #c3c3c3;
    font: 15px/20px "Noto Sans", "Noto Sans CJK JP", sans-serif;
}
button, input, select {
    margin: 0;
    padding: 0;
    border: 0;
    background: none;
    color: inherit;
    font: inherit;
    min-width: 0;
}
a {
    color: inherit;
    text-decoration: none;
}
h2, h3, ul {
    margin: 0;
    padding: 0;
    font-size: 15px;
    font-weight: normal;
    list-style: none;
}
svg {
    display: block;
    flex: none;
}
i {
    display: block;
    flex: none;
}
.sprite {
    position: absolute;
}
.solid {
    fill: currentColor;
}
.line1, .line2, .line3 {
    fill: none;
    stroke: currentColor;
    stroke-width: 1;
}
.line2 {
    stroke-width: 2;
}
.line3 {
    stroke-width: 3;
}
.dim {
    color: #757575;
}
.icon-button {
    display: flex;
    align-items: center;
    gap: 8px;
}

/* Menu bar */
.menu-bar {
    flex: none;
    display: flex;
    align-items: center;
    height: 39px;
    padding-bottom: 6px;
    padding-left: 10px;
    border-bottom: 2px solid #424242;
    font-size: 16px;
    color: #dedede;
}
.app-logo {
    width: 42px;
    font-size: 28px;
    line-height: 30px;
    font-weight: 600;
    font-family: "Open Sans", sans-serif;
    padding-top: 2px;
    color: #c58b68;
}
.home {
    padding-top: 6px;
    color: #c3c3c3;
}
.menus {
    display: flex;
    gap: 19px;
    margin-left: 16px;
    padding-left: 20px;
    border-left: 1px solid #484848;
    white-space: nowrap;
}
.arrange {
    margin-left: 15px;
    padding: 1px 0 0 15px;
    border-left: 1px solid #484848;
    gap: 10px;
}
.workspace-switch {
    display: flex;
    align-items: center;
    gap: 12px;
    margin-left: auto;
    padding: 2px 16px 0 14px;
    border: solid #484848;
    border-width: 0 1px;
    font-size: 15px;
}
.stock-search {
    display: flex;
    align-items: center;
    gap: 4px;
    width: 228px;
    height: 26px;
    margin: 5px 12px 0 11px;
    padding-left: 4px;
    border: 1px solid #666;
    border-radius: 3px;
    background: #454545;
    font-size: 15px;
}
.stock-search input {
    width: 180px;
}
.stock-search input::placeholder {
    color: #8d8d8d;
    opacity: 1;
}
.window-buttons {
    display: flex;
    align-self: flex-start;
    margin-right: 5px;
    border: 1px solid #606060;
    border-top: 0;
    border-radius: 0 0 4px 4px;
    color: #c3c3c3;
}
.window-buttons button {
    display: flex;
    align-items: center;
    justify-content: center;
    width: 34px;
    height: 24px;
}
.window-buttons button + button {
    border-left: 1px solid #606060;
}

/* Control bar */
.control-bar {
    flex: none;
    display: flex;
    align-items: center;
    height: 43px;
    padding: 0 22px 0 19px;
    border-bottom: 2px solid #404040;
    white-space: nowrap;
}
.selection-state {
    width: 156px;
    margin-right: 6px;
    border-right: 1px solid #484848;
}
.picker, .combo {
    display: flex;
    flex: none;
    height: 26px;
    border: 1px solid #646464;
    border-radius: 2px;
    background: #454545;
    color: #eee;
}
.control-bar > .picker {
    margin-right: 8px;
}
.chip {
    width: 24px;
    border: 1px solid #d8d8d8;
}
.chip-fill {
    background: #fff;
}
.chip-stroke {
    outline: 1px solid #ddd;
    outline-offset: -1px;
    border: 0;
    background: linear-gradient(#fff, #fff) center / 4px 4px no-repeat, linear-gradient(#000, #000) center / 6px 6px no-repeat, linear-gradient(#fff, #fff) center / 8px 8px no-repeat, #000;
}
.chip-style {
    background: #e2e2e2;
}
.drop, .spin {
    display: flex;
    flex: none;
    align-items: center;
    justify-content: center;
    width: 22px;
    border-left: 1px solid #5b5b5b;
}
.spin {
    border-left: 0;
    border-right: 1px solid #5b5b5b;
}
.combo input, .combo select {
    flex: 1;
    width: 0;
    padding-left: 5px;
    font-size: 16px;
    appearance: none;
}
.dotted {
    margin: 0 11px 0 7px;
    border-bottom: 2px dotted #a0a0a0;
    color: #e4e4e4;
    font-weight: 500;
}
.combo-stroke {
    width: 108px;
    margin-right: 8px;
}
.preview {
    display: flex;
    align-items: center;
    justify-content: space-between;
    height: 24px;
    background: #e2e2e2;
    color: #111;
}
.profile {
    width: 111px;
    padding: 0 4px 0 7px;
}
.stroke-sample {
    width: 63px;
    height: 4px;
    background: #000;
}
.brush {
    width: 107px;
    padding: 0 8px 0 9px;
}
.dot-sample {
    width: 7px;
    height: 7px;
    border-radius: 50%;
    background: #000;
}
.picker + .dotted {
    margin-left: 4px;
}
.combo-opacity {
    width: 95px;
}
.style-label {
    width: 86px;
    padding-left: 6px;
}
.text-button {
    height: 26px;
    margin-right: 7px;
    padding: 0 11px;
    border: 2px solid #6c6c6c;
    border-radius: 3px;
    line-height: 20px;
    color: #fff;
}
.doc-setup {
    margin-left: 8px;
}
.preferences {
    padding: 0 18px;
}
.isolate {
    margin-left: 5px;
}
.control-end {
    display: flex;
    align-items: center;
    gap: 18px;
    margin-left: auto;
}
.magnet-drop {
    margin: 0 12px 0 -7px;
}

/* Document window */
.workspace {
    flex: 1;
    display: flex;
    min-height: 0;
    position: relative;
    overflow: hidden;
}
.document {
    flex: 1;
    min-width: 0;
    display: flex;
    flex-direction: column;
    border-right: 3px solid #3a3a3a;
    border-bottom: 2px solid #3d3d3d;
}
.document-tabs {
    flex: none;
    display: flex;
    height: 36px;
    background: #434343;
    border-bottom: 1px solid #383838;
}
.document-tab {
    display: flex;
    align-items: center;
    justify-content: space-between;
    width: 356px;
    padding: 0 8px 0 14px;
    background: #535353;
    color: #dedede;
    font-size: 14px;
    font-feature-settings: "palt";
    white-space: nowrap;
}
.canvas {
    flex: 1;
    min-height: 0;
    position: relative;
    display: flex;
    justify-content: flex-end;
    overflow: hidden;
    background: #5e5e5e;
}
.artboard {
    position: absolute;
    left: 649px;
    top: 51px;
    width: 596px;
    height: 842px;
    border: 1px solid #000;
    background: #fff;
}
.v-scroll {
    display: flex;
    flex-direction: column;
    align-items: center;
    justify-content: space-between;
    width: 19px;
    padding: 4px 0;
    background: #4b4b4b;
}
.v-thumb {
    width: 16px;
    height: 32px;
    border-radius: 8px;
    background: #696969;
}
.status-bar {
    flex: none;
    display: flex;
    align-items: center;
    height: 19px;
    padding-left: 5px;
    background: #505050;
    overflow: hidden;
}
.status-field {
    display: flex;
    height: 19px;
    padding-top: 5px;
    background: #454545;
    color: #e4e4e4;
    font-size: 14px;
    line-height: 14px;
}
.status-field input {
    flex: 1;
    width: 0;
    padding-left: 5px;
}
.status-field button {
    display: flex;
    justify-content: center;
    align-items: center;
    width: 22px;
    border-left: 1px solid #5b5b5b;
}
.zoom-field {
    width: 84px;
}
.page-field {
    width: 72px;
}
.status-nav {
    display: flex;
    gap: 11px;
    width: 52px;
    padding-left: 10px;
    color: #757575;
}
.status-text {
    width: 253px;
    padding: 5px 0 0 9px;
    margin-left: 1px;
    text-align: center;
    font-size: 13px;
}
.status-play {
    margin: 0 9px 0 8px;
}
.h-scroll {
    flex: 1;
    display: flex;
    align-items: center;
    justify-content: space-between;
    height: 19px;
    padding: 0 25px 0 2px;
    background: #484848;
}
.h-thumb {
    width: 32px;
    height: 19px;
    margin-right: 18px;
    border-radius: 9px;
    background: #5e5e5e;
}

/* Panels */
.panel {
    position: absolute;
    border: 1px solid #383838;
    background: #535353;
    box-shadow: 2px 2px 3px rgba(0, 0, 0, .3);
}
.panel-head {
    display: flex;
    align-items: center;
    justify-content: flex-end;
    gap: 13px;
    height: 16px;
    padding-right: 5px;
    background: #434343;
    border-bottom: 1px solid #383838;
}
.tabs {
    display: flex;
    align-items: center;
    height: 34px;
    background: #434343;
    border-bottom: 1px solid #3a3a3a;
}
.tab {
    display: flex;
    align-items: center;
    gap: 7px;
    height: 34px;
    padding: 0 10px 0 13px;
    border-right: 1px solid #3a3a3a;
    color: #a0a0a0;
    font-size: 14px;
    white-space: nowrap;
}
.tab.active {
    min-width: 58px;
    padding: 0 8px 0 6px;
    background: #535353;
    color: #fff;
}
.tab-kana, .tab-kana.active {
    padding: 0 10px;
    font-size: 13px;
    font-feature-settings: "palt";
}
.panel-menu {
    margin: 0 6px 0 auto;
    color: #a0a0a0;
}

/* Layers dock */
.dock {
    flex: none;
    display: flex;
    flex-direction: column;
    width: 290px;
    border-right: 1px solid #383838;
    border-bottom: 2px solid #3d3d3d;
}
.dock .panel-head, .dock .tabs, .dock-foot {
    flex: none;
}
.dock .panel-head {
    height: 15px;
    padding-right: 8px;
}
.dock .panel-menu {
    margin-right: 7px;
}
.layer-list {
    flex: 1;
    margin: 7px 8px 0 7px;
    border: 1px solid #606060;
    border-radius: 2px;
}
.layer-row {
    display: flex;
    align-items: center;
    height: 25px;
    padding: 0 25px 0 5px;
    background: #50657f;
    color: #e2e2e2;
}
.layer-color {
    width: 4px;
    height: 23px;
    margin: 0 33px;
    background: #5480ff;
}
.layer-thumb {
    width: 22px;
    height: 22px;
    margin-right: 7px;
    border: 1px solid #000;
    background: #fff;
}
.layer-target {
    width: 11px;
    height: 11px;
    margin-left: auto;
    border: 2px solid #c3c3c3;
    border-radius: 50%;
}
.dock-foot {
    display: flex;
    align-items: center;
    justify-content: space-between;
    height: 24px;
    padding: 0 34px 0 8px;
}
.dock-foot span {
    margin-right: -8px;
}

/* Toolbox */
.toolbox {
    left: 30px;
    top: 68px;
    width: 90px;
    height: 709px;
}
.toolbox-head {
    padding-right: 29px;
}
.grip {
    margin: 4px auto 14px 32px;
}
.tool-grid {
    display: grid;
    grid-template-columns: 38px 38px;
    grid-auto-rows: 30px;
    padding: 0 0 3px 6px;
    border-bottom: 1px solid #484848;
}
.tool {
    display: flex;
    align-items: center;
    justify-content: center;
    border-radius: 2px;
}
.tool.active {
    background: #2e2e2e;
}
.more-tools {
    background: linear-gradient(135deg, transparent 50%, #c3c3c3 50%) 31px 24px / 5px 5px no-repeat;
}
.fill-stroke {
    position: relative;
    height: 72px;
    margin-top: 5px;
}
.big-fill, .big-stroke {
    position: absolute;
    left: 7px;
    top: 0;
    width: 45px;
    height: 45px;
    border: 1px solid #303030;
    background: #fff;
}
.big-stroke {
    left: 30px;
    top: 24px;
    border: 1px solid #fff;
    background: linear-gradient(#535353, #535353) center / 19px 19px no-repeat, linear-gradient(#fff, #fff) center / 21px 21px no-repeat, #000;
}
.swap {
    position: absolute;
    left: 61px;
    top: 1px;
}
.default {
    position: absolute;
    left: 7px;
    top: 52px;
}
.mode-row {
    display: flex;
    width: 74px;
    height: 25px;
    margin: 4px 0 5px 7px;
    border: 1px solid #626262;
}
.mode-row button {
    display: flex;
    align-items: center;
    justify-content: center;
    width: 24px;
}
.mode-row .active {
    background: #2e2e2e;
}
.mode-color {
    width: 17px;
    height: 17px;
    border: 2px solid #000;
    background: #fff;
}
.mode-gradient {
    background: linear-gradient(90deg, #fff, #333);
}
.none {
    background: linear-gradient(135deg, #fff 43%, #e60012 43%, #e60012 57%, #fff 57%);
}
.screens {
    margin: 9px 0 27px 29px;
}
.more {
    margin-left: 35px;
}

/* All tools drawer */
.drawer {
    position: absolute;
    left: 103px;
    top: 68px;
    width: 321px;
    height: 682px;
    padding: 3px 7px 0;
    border: 1px solid #646464;
    background: #535353;
    box-shadow: 2px 2px 3px rgba(0, 0, 0, .5);
}
.drawer-head {
    display: flex;
    justify-content: flex-end;
}
.drawer h2 {
    margin: 6px 0 9px;
    line-height: 22px;
    font-weight: bold;
}
.drawer-body {
    display: flex;
    justify-content: space-between;
    height: 556px;
    border: solid #494949;
    border-width: 1px 0;
}
.tool-list {
    width: 285px;
    overflow: hidden;
    color: #757575;
}
.tool-list ul {
    margin-bottom: 11px;
    border: 1px solid #606060;
}
.tool-list .first {
    margin-top: -8px;
}
.tool-list li {
    display: flex;
    align-items: center;
    gap: 8px;
    height: 37px;
    padding: 0 16px 0 6px;
}
.tool-list li:nth-child(even) {
    height: 38px;
}
.tool-list li + li {
    border-top: 1px solid #606060;
}
.tool-list svg {
    color: #868686;
}
.tool-list kbd {
    margin-left: auto;
    font: inherit;
}
.drawer-scroll {
    display: flex;
    flex-direction: column;
    align-items: center;
    width: 14px;
    padding: 2px 0;
    background: #4b4b4b;
}
.drawer-scroll i {
    width: 12px;
    height: 75px;
    margin: 70px 0 auto;
    border-radius: 6px;
    background: #666;
}
.drawer-foot {
    display: flex;
    align-items: center;
    gap: 9px;
    padding: 22px 0 0 53px;
}
.drawer-foot span {
    margin-right: 4px;
}
.drawer-foot button {
    display: flex;
    align-items: center;
    justify-content: center;
    width: 30px;
    height: 30px;
    border-radius: 2px;
    background: #2e2e2e;
    color: #fff;
}

/* Character and stroke */
.type-panel {
    right: 302px;
    top: 12px;
    width: 319px;
    height: 677px;
    overflow: hidden;
}
.type-body {
    padding: 8px 6px 7px;
}
.font-family {
    width: 297px;
    margin-bottom: 6px;
}
.font-find {
    margin: 4px 4px 0 2px;
    color: #a8a8a8;
}
.font-style {
    margin-bottom: 7px;
}
.type-grid {
    display: grid;
    grid-template-columns: 133px 133px;
    justify-content: space-between;
    gap: 6px 0;
    padding-top: 9px;
    border-top: 1px solid #484848;
}
.type-field {
    display: flex;
    align-items: center;
    justify-content: space-between;
}
.type-field .combo {
    width: 107px;
}
.stroke-tabs {
    border-top: 2px solid #383838;
    height: 36px;
}
.stroke-body {
    padding: 8px 6px 0;
}
.stroke-row {
    display: flex;
    align-items: center;
    margin-bottom: 7px;
    height: 27px;
}
.stroke-row > label:first-child, .label {
    width: 103px;
    margin-right: 4px;
    text-align: right;
}
.combo-weight {
    width: 117px;
}
.segmented {
    display: flex;
    height: 27px;
    border: 1px solid #626262;
    border-radius: 2px;
}
.segmented button {
    display: flex;
    align-items: center;
    justify-content: center;
    width: 28px;
}
.segmented button + button {
    border-left: 1px solid #626262;
}
.segmented .active {
    background: #2e2e2e;
    color: #fff;
}
.stroke-row .ratio-label {
    margin: 0 7px 0 8px;
}
.combo-ratio {
    width: 54px;
}
.dash-head {
    display: flex;
    align-items: center;
    height: 42px;
    border-top: 1px solid #484848;
    color: #eee;
}
.dash-head input {
    appearance: none;
    width: 16px;
    height: 16px;
    margin: 0 6px 0 1px;
    border: 2px solid #c3c3c3;
    border-radius: 2px;
}
.dash-modes {
    margin-left: auto;
}
.dash-modes button {
    width: 47px;
}
.dash-grid {
    display: grid;
    grid-template-columns: repeat(6, 1fr);
    gap: 4px;
    padding-bottom: 9px;
    border-bottom: 1px solid #484848;
    text-align: center;
    color: #757575;
}
.dash-grid input {
    display: block;
    width: 100%;
    height: 26px;
    margin-bottom: 3px;
    border-radius: 2px;
    background: #595959;
}
.arrow-row {
    margin-top: 9px;
    margin-bottom: 9px;
}
.arrow-row .picker {
    margin-right: 8px;
}
.arrow {
    width: 53px;
    padding: 0 6px;
}
.arrow .stroke-sample {
    width: 41px;
}
.arrow-swap {
    margin-left: 7px;
}
.scale-row .combo {
    width: 77px;
    margin-right: 8px;
}
.combo:has(:disabled) {
    border-color: #595959;
    background: #595959;
    color: #757575;
}
.profile-row {
    display: flex;
    justify-content: flex-end;
    padding-top: 20px;
    margin-top: 43px;
    border-top: 1px solid #484848;
}

/* Swatches */
.swatch-panel {
    right: 347px;
    bottom: 1px;
    width: 314px;
    height: 360px;
}
.swatch-panel .panel-head, .type-panel .panel-head {
    padding-right: 5px;
}
.swatch-head {
    display: flex;
    justify-content: space-between;
    height: 49px;
    padding: 7px 7px 0;
}
.mini-fs {
    position: relative;
    width: 38px;
    height: 38px;
}
.mini-fill, .mini-stroke {
    position: absolute;
    left: 0;
    top: 0;
    width: 25px;
    height: 25px;
    border: 1px solid #303030;
    background: #fff;
}
.mini-stroke {
    left: 12px;
    top: 12px;
    border-color: #fff;
    outline: 1px solid #303030;
    outline-offset: 0;
    background: linear-gradient(#535353, #535353) center / 9px 9px no-repeat, linear-gradient(#fff, #fff) center / 11px 11px no-repeat, #000;
}
.view-modes {
    height: 30px;
}
.view-modes button {
    width: 30px;
}
.swatch-list {
    height: 238px;
    margin: 2px 7px 0 6px;
    padding: 1px;
    border: 1px solid #5b5b5b;
}
.swatches {
    display: grid;
    grid-template-columns: repeat(16, 1fr);
    grid-auto-rows: 16px;
    gap: 1px;
    width: 279px;
    margin-bottom: 4px;
}
.swatch {
    border: 0;
}
.picked {
    background: #fff;
    border: 1px solid #fff;
    box-shadow: inset 0 0 0 1px #000;
}
.swatch.none {
    background: linear-gradient(135deg, #fff 44%, #e60012 44%, #e60012 56%, #fff 56%);
}
.registration {
    background: linear-gradient(#555, #555) center / 1px 100% no-repeat, linear-gradient(#555, #555) center / 100% 1px no-repeat, radial-gradient(circle, #555 2px, #ececec 2px, #ececec 5px, #555 5px, #555 6px, #ececec 6px);
}
.grad-bw {
    background: linear-gradient(90deg, #fff, #222);
}
.grad-orange {
    background: linear-gradient(90deg, #ffe100, #e9502b);
}
.grad-sky {
    background: linear-gradient(90deg, #1b7fc4, #e6eef4);
}
.grad-spot {
    background: radial-gradient(circle, #ddd 5px, #000 7px);
}
.pattern-leaf {
    background: radial-gradient(circle, #b8d870 2px, #5faa22 3px, #5faa22 5px, #e8f6d8 6px, #7cc02c 9px);
}
.pattern-vine {
    background: repeating-radial-gradient(circle at 30% 40%, #f2e4d0 0 1px, #96623c 2px 3px);
}
.swatch-foot {
    display: flex;
    align-items: center;
    justify-content: space-between;
    height: 20px;
    padding: 0 34px 0 13px;
    margin-top: 1px;
}
.foot-cloud {
    margin-right: 16px;
}

/* Color */
.color-panel {
    right: 19px;
    top: 539px;
    width: 300px;
    height: 271px;
}
.color-title {
    display: flex;
    align-items: center;
    gap: 6px;
    height: 34px;
    padding-left: 5px;
    font-size: 13px;
    font-feature-settings: "palt";
    color: #fff;
}
.color-icons {
    display: flex;
    gap: 9px;
    padding: 7px 6px 6px;
}
.color-panel .mini-fs {
    margin-left: 6px;
}
.k-row {
    display: flex;
    align-items: center;
    height: 26px;
    margin: 36px 10px 13px 64px;
}
.k-row label {
    width: 18px;
}
.k-row input[type="range"] {
    appearance: none;
    width: 134px;
    height: 16px;
    margin-right: 9px;
}
.k-row input::-webkit-slider-runnable-track {
    height: 16px;
    background: linear-gradient(90deg, #fff, #231815) 6px 1px / 127px 6px no-repeat;
}
.k-row input::-webkit-slider-thumb {
    appearance: none;
    width: 12px;
    height: 10px;
    margin-top: 6px;
    background: #c3c3c3;
    clip-path: polygon(50% 0, 100% 50%, 100% 100%, 0 100%, 0 50%);
}
.combo-k {
    width: 45px;
    margin-right: 3px;
}
.quick-colors {
    display: flex;
    padding-left: 6px;
}
.quick-colors i {
    width: 17px;
    height: 17px;
    border: 1px solid #303030;
    border-left-width: 0;
}
.black {
    background: #000;
}
.white {
    background: #fff;
}
.spectrum {
    height: 30px;
    margin: 12px 22px 8px 6px;
    border: 1px solid #303030;
    background: linear-gradient(#fff, transparent 50%, #000), linear-gradient(90deg, #e0001c, #f7931e 10%, #f5ec1e 17%, #6cb92d 33%, #20a860 44%, #22b5ea 54%, #143c9e 68%, #8c2a90 84%, #e6007e 92%, #e00020);
}
.color-foot {
    display: flex;
    justify-content: center;
    padding-top: 1px;
    border-top: 1px solid #3a3a3a;
}

/* Align */
.align-panel {
    right: -16px;
    top: 397px;
    width: 293px;
    height: 291px;
}
.align-panel .panel-head {
    gap: 14px;
    padding-right: 7px;
}
.align-panel .panel-menu {
    margin-right: 10px;
}
.align-group {
    height: 80px;
    margin: 0 0 0 7px;
    padding-top: 10px;
    border-bottom: 1px solid #484848;
}
.align-group h3, .space-group h3 {
    height: 20px;
    white-space: nowrap;
}
.align-icons {
    display: flex;
    gap: 23px;
    padding: 15px 0 0 5px;
}
.align-icons svg:nth-child(4) {
    margin-left: 16px;
}
.space-group {
    display: flex;
    padding: 6px 0 0 7px;
}
.space-left {
    width: 205px;
    height: 68px;
    border-right: 1px solid #484848;
}
.space-left h3, .space-right h3 {
    margin-top: 4px;
}
.space-right {
    padding-left: 26px;
}
.space-row {
    display: flex;
    align-items: center;
    gap: 18px;
    height: 30px;
    margin-top: 11px;
    padding-left: 4px;
}
.space-row .combo {
    width: 106px;
    margin-left: -6px;
}
.space-right .icon-button {
    gap: 2px;
    height: 30px;
    margin: 11px 0 0 6px;
}

/* Taskbar */
.taskbar {
    flex: none;
    display: flex;
    height: 50px;
    background: linear-gradient(90deg, #742a2a, #6d0505 4%, #6d0505 87%, #722222 91%, #6d0505 96%);
    color: #fff;
}
.start {
    display: flex;
    align-items: center;
    justify-content: center;
    width: 60px;
}
.task-search {
    display: flex;
    align-items: center;
    width: 430px;
    padding: 0 18px 0 11px;
    background: #f6f1f0;
}
.cortana {
    width: 27px;
    height: 27px;
    border: 4px solid #000;
    border-radius: 50%;
}
.task-search input {
    flex: 1;
    padding-left: 12px;
}
.task-search input::placeholder {
    color: #444;
    opacity: 1;
}
.apps {
    display: flex;
    margin-left: -1px;
}
.apps button {
    display: flex;
    align-items: center;
    justify-content: center;
    width: 62px;
}
.running {
    background: linear-gradient(#ffabab, #ffabab) center bottom / 52px 3px no-repeat;
}
.running.current {
    background: linear-gradient(#ffabab, #ffabab) center bottom / 100% 3px no-repeat, #9c1717;
}
.ai-tile {
    width: 28px;
    height: 28px;
    border: 2px solid #ff7f18;
    background: #261300;
    color: #ff7f18;
    font-weight: bold;
    line-height: 24px;
}
.tray {
    display: flex;
    align-items: center;
    gap: 12px;
    margin-left: auto;
    margin-right: 5px;
    padding-right: 15px;
    border-right: 1px solid #c08080;
}
.ime {
    font-size: 24px;
    line-height: 24px;
    font-family: "Open Sans", sans-serif;
    font-weight: 300;
}
.tray time {
    width: 80px;
    font-size: 15px;
    line-height: 23px;
    text-align: center;
}
.notice {
    position: relative;
    margin-left: 10px;
    padding-right: 10px;
}
.notice span {
    position: absolute;
    left: 9px;
    top: 9px;
    width: 21px;
    height: 21px;
    border: 1px solid #d08080;
    border-radius: 50%;
    background: #6d0505;
    line-height: 19px;
}
```
